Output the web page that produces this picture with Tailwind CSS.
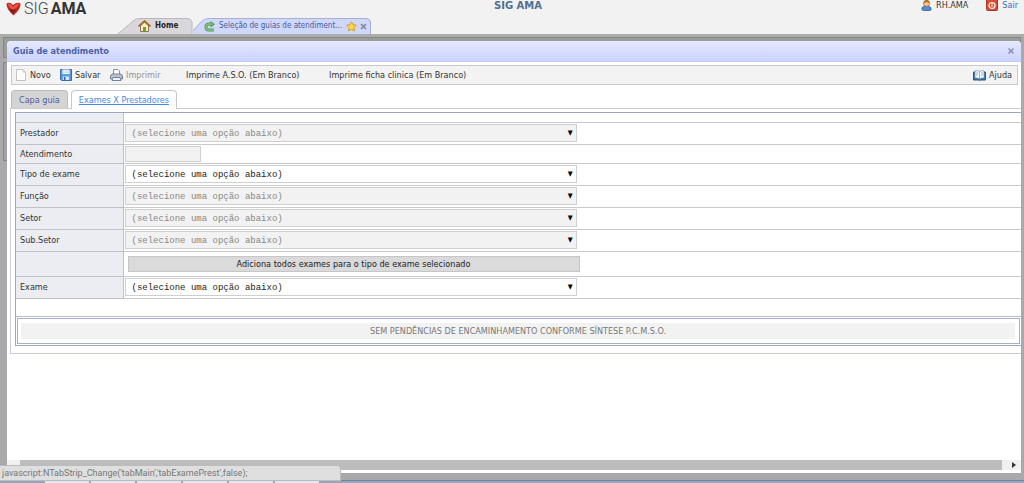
<!DOCTYPE html>
<html lang="pt-BR">
<head>
<meta charset="utf-8">
<meta name="viewport" content="width=device-width, initial-scale=1">
<title>SIG AMA</title>
<script src="https://cdn.jsdelivr.net/npm/@tailwindcss/browser@4"></script>
</head>
<body class="flex h-screen flex-col overflow-hidden bg-[#a8a8a8] font-['DejaVu_Sans_Condensed','DejaVu_Sans',sans-serif] text-[9px] leading-3 text-[#333]">
<header class="grid h-[34px] shrink-0 grid-cols-[1fr_auto_1fr] bg-[#f2f2f2]">
  <div class="flex items-start gap-[3px] pl-[6px]">
    <svg class="mt-px h-[15px] w-[15px] shrink-0" viewBox="0 0 15 15" aria-hidden="true"><path d="M.5 2.500Q4 .5 7 4Q11 .5 14.500 2.500Q15 8 7.500 14.500Q0 8 .5 2.500Z" fill="#ba2924"/><path d="M2 3Q5 2 7 6Q10 2 13 3Q12 6 7 9Q3 7 2 3Z" fill="#ee5140"/><path d="M3 8L7 13 10 9Z" fill="#811b1b"/></svg>
    <span class="flex font-['Roboto',sans-serif] text-[16px] leading-[18px] text-[#333]"><span class="font-light text-[#444]">SIG</span><b class="pl-[2px]">AMA</b></span>
  </div>
  <h1 class="pl-3 font-['DejaVu_Sans',sans-serif] text-[10px] font-bold leading-[12px] text-[#4f6f91]">SIG AMA</h1>
  <div class="flex items-start justify-end gap-[18px] pr-[6px]">
    <span class="flex gap-1 leading-[11px]"><svg class="h-[11px] w-[11px]" viewBox="0 0 11 11" aria-hidden="true"><path d="M1 10Q0 6 5 6Q11 6 10 10Q6 12 1 10Z" fill="#5589d1" stroke="#315990" stroke-width=".7"/><circle cx="5.5" cy="3.5" r="3" fill="#f5c47d" stroke="#8b6337" stroke-width=".7"/><path d="M2.500 3Q3 0 6 0Q9 1 8.500 3L6 2Z" fill="#a66c2b"/></svg>RH.AMA</span>
    <a href="#" class="flex gap-1 leading-[11px] text-[#416bc2]"><svg class="h-[11px] w-3" viewBox="0 0 12 11" aria-hidden="true"><rect x=".5" y="-1" width="11" height="11.500" rx="1" fill="#d94b35" stroke="#b33421"/><circle cx="6" cy="5.500" r="3" fill="none" stroke="#fff" stroke-width="1.200"/><path d="M6 3V7" stroke="#fff"/></svg>Sair</a>
  </div>
  <nav class="col-span-3 -mt-[16px] flex self-end pl-[118px] text-[8px]" aria-label="Janelas">
    <a href="#" class="relative flex h-4 w-[75px] items-center gap-1 pl-5 font-bold text-[#222]">
      <svg class="absolute inset-0 h-full w-full" viewBox="0 0 75 16" preserveAspectRatio="none" aria-hidden="true"><path d="M0 16L15 3Q18 .5 22 .5H69Q73 .5 74 4V16" fill="#d9d7dc" stroke="#b8b8be"/></svg>
      <svg class="relative h-3 w-[13px] shrink-0" viewBox="0 0 13 12" aria-hidden="true"><path d="M2.500 6V11.500H10.500V6L6.500 2Z" fill="#fff0c2" stroke="#8b7654"/><path d="M.5 6.500L6.500 1L12.500 6.500" fill="none" stroke="#a9641f" stroke-width="1.600"/><path d="M5 7H8V11.500H5Z" fill="#709c43"/></svg>
      <span class="relative">Home</span>
    </a>
    <div class="relative flex h-4 w-[178px] items-center pl-[11px] text-[#466099]">
      <svg class="absolute inset-0 h-full w-full" viewBox="0 0 178 16" preserveAspectRatio="none" aria-hidden="true"><path d="M-3 16L8 4Q11 .5 16 .5H173Q177 .5 177.500 4V16" fill="#cfd7fb" stroke="#a9afd3"/></svg>
      <svg class="relative mr-1 h-[11px] w-[11px] shrink-0" viewBox="0 0 11 11" aria-hidden="true"><path d="M10 9H5Q2 9 2 6Q2 3 5 3H7" fill="none" stroke="#4b9850" stroke-width="3"/><path d="M6.500 0L11 3.200L6.500 6.500Z" fill="#4b9850"/><path d="M10 9H5Q2 9 2 6Q2 3 5 3H9" fill="none" stroke="#82c47c" stroke-width="1.500"/></svg>
      <a href="#" class="relative whitespace-nowrap">Seleção de guias de atendiment...</a>
      <svg class="relative ml-auto h-[11px] w-[11px] shrink-0" viewBox="0 0 11 11" aria-hidden="true"><path d="M5.500 .8L7 3.700L10.300 4.200L8 6.500L8.500 9.900L5.500 8.400L2.500 9.900L3 6.500L.7 4.200L4 3.700Z" fill="#ffd84b" stroke="#d79b28"/></svg>
      <button class="relative ml-[2px] mr-[3px] h-3 w-[9px] shrink-0" aria-label="Fechar aba"><svg class="h-3 w-[9px]" viewBox="0 0 9 12"><path d="M2 4L7 9M7 4L2 9" stroke="#8386a2" stroke-width="1.700"/></svg></button>
    </div>
  </nav>
</header>
<main class="relative flex min-h-0 flex-1 flex-col border-t-[3px] border-[#abada9] bg-[#a9a9ab] pb-[7px] pl-[7px] pr-[3px] pt-1">
  <div class="absolute inset-x-[3px] top-0 h-[21px] border border-[#85868a] bg-[#9b9d9b]"></div>
  <div class="absolute inset-x-[3px] top-[25px] h-[99px] border border-[#85868f] bg-[#a2a2aa]"></div>
  <section class="relative flex min-h-0 flex-1 flex-col overflow-hidden rounded-t bg-white" aria-label="Guia de atendimento">
    <div class="flex h-[21px] shrink-0 items-center justify-between border-b border-[#c5ccef] bg-linear-to-b from-[#e5e8ff] to-[#cbd3ff] pl-[6px] pr-[6px]">
      <h2 class="font-bold text-[#4c61a6]">Guia de atendimento</h2>
      <button class="h-2 w-2" aria-label="Fechar"><svg class="h-2 w-2" viewBox="0 0 8 8"><path d="M1.500 1.500L6.500 6.500M6.500 1.500L1.500 6.500" stroke="#8f91b5" stroke-width="1.700"/></svg></button>
    </div>
    <div class="ml-1 mr-[3px] mt-[3px] flex h-5 shrink-0 items-center border border-[#c9c9c9] bg-[#f3f3f3] pl-1 pr-[5px]" role="toolbar">
      <button class="flex w-[44px] items-center gap-1"><svg class="h-3 w-[10px]" viewBox="0 0 10 12" aria-hidden="true"><path d="M.5 .5H7L9.500 3V11.500H.5Z" fill="#fff" stroke="#c2c2c2"/><path d="M7 .5V3H9.500" fill="none" stroke="#c2c2c2"/></svg>Novo</button>
      <button class="flex w-[50px] items-center gap-[3px]"><svg class="h-3 w-3" viewBox="0 0 12 12" aria-hidden="true"><path d="M.5 .5H11.500V11.500H1.500L.5 10.500Z" fill="#5b9be1" stroke="#356eae"/><path d="M2.500 .5H9.500V5H2.500Z" fill="#fff"/><path d="M3 2H9M3 3.700H9" stroke="#a8c5e8" stroke-width=".7"/><path d="M3 7.500H9V11H3Z" fill="#d7e9fb"/><path d="M4 8H5.500V11H4Z" fill="#356eae"/></svg>Salvar</button>
      <button class="flex w-[76px] items-center gap-[3px] text-[#929292]" disabled><svg class="h-3 w-[13px]" viewBox="0 0 13 12" aria-hidden="true"><path d="M3.500 6V.5H8L9.500 2V6" fill="#fff" stroke="#7294c0"/><path d="M2 5H11L12.500 7V10H.5V7Z" fill="#bec2c8" stroke="#777f8b"/><path d="M3 8.500H10L11 11.500H2Z" fill="#edf4ff" stroke="#7083a0"/></svg>Imprimir</button>
      <button class="w-[143px] text-left">Imprime A.S.O. (Em Branco)</button>
      <button>Imprime ficha clinica (Em Branco)</button>
      <button class="ml-auto flex items-center gap-[3px]"><svg class="h-[11px] w-[13px]" viewBox="0 0 13 11" aria-hidden="true"><path d="M.5 2H12.500V10H7.500L6.500 10.700L5.500 10H.5Z" fill="#3d77a9" stroke="#2b557b"/><path d="M2 1Q5 0 6.500 1.500Q8 0 11 1V8Q8 7.500 6.500 9Q5 7.500 2 8Z" fill="#fff" stroke="#688ca8" stroke-width=".7"/><path d="M6.500 1.500V9M3 3H5M3 5H5M8 3H10M8 5H10" stroke="#6990ad" stroke-width=".7"/></svg>Ajuda</button>
    </div>
    <div class="relative z-10 ml-1 mt-[5px] flex h-[18px] shrink-0 items-end gap-[3px]" role="tablist">
      <button role="tab" aria-selected="false" class="h-[18px] rounded-t border border-b-0 border-[#bcbcbc] bg-[#d4d4d4] px-[7px] text-[#4f60a8]">Capa guia</button>
      <button role="tab" aria-selected="true" class="-mb-px h-[19px] rounded-t border border-b-0 border-[#c7c7c7] bg-white px-[7px] text-[#4b86e3] underline">Exames X Prestadores</button>
    </div>
    <div class="ml-[3px] shrink-0 border border-r-0 border-[#cbcbd3] pb-[7px] pl-1 pt-[3px]">
      <div class="border border-r-0 border-[#9ca7bf]">
        <table class="w-full table-fixed border-collapse [&_select]:pt-[2px] [&_td]:border-b [&_td]:border-[#cacace] [&_td]:p-0 [&_td]:pl-px [&_th]:border-r [&_th]:border-b [&_th]:border-[#c0c2c8] [&_th]:bg-[#ebedf2] [&_th]:p-0 [&_th]:pl-1 [&_th]:text-left [&_th]:font-normal">
          <colgroup><col class="w-[107px]"><col></colgroup>
          <tbody>
            <tr class="h-[9px]"><th></th><td></td></tr>
            <tr class="h-[22px]"><th><label for="prest">Prestador</label></th><td><div class="relative h-[18px] w-[452px]"><select id="prest" disabled class="block h-full w-full appearance-none border border-[#cfcfcf] bg-[#f2f2f2] pl-[6px] font-['Liberation_Mono',monospace] text-[9px] text-[#888] opacity-100"><option>(selecione uma opção abaixo)</option></select><span class="pointer-events-none absolute right-1 top-[4px] text-[7px] leading-[11px] text-black">▼</span></div></td></tr>
            <tr class="h-[19px]"><th><label for="atend">Atendimento</label></th><td><input id="atend" type="text" disabled class="block h-4 w-[76px] border border-[#cfcfcf] bg-[#f2f2f2]"></td></tr>
            <tr class="h-[22px]"><th><label for="tipo">Tipo de exame</label></th><td><div class="relative h-[18px] w-[452px]"><select id="tipo" class="block h-full w-full appearance-none border border-[#cfcfcf] bg-white pl-[6px] font-['Liberation_Mono',monospace] text-[9px] text-[#222]"><option>(selecione uma opção abaixo)</option></select><span class="pointer-events-none absolute right-1 top-[4px] text-[7px] leading-[11px] text-black">▼</span></div></td></tr>
            <tr class="h-[22px]"><th><label for="func">Função</label></th><td><div class="relative h-[18px] w-[452px]"><select id="func" disabled class="block h-full w-full appearance-none border border-[#cfcfcf] bg-[#f2f2f2] pl-[6px] font-['Liberation_Mono',monospace] text-[9px] text-[#888] opacity-100"><option>(selecione uma opção abaixo)</option></select><span class="pointer-events-none absolute right-1 top-[4px] text-[7px] leading-[11px] text-black">▼</span></div></td></tr>
            <tr class="h-[22px]"><th><label for="setor">Setor</label></th><td><div class="relative h-[18px] w-[452px]"><select id="setor" disabled class="block h-full w-full appearance-none border border-[#cfcfcf] bg-[#f2f2f2] pl-[6px] font-['Liberation_Mono',monospace] text-[9px] text-[#888] opacity-100"><option>(selecione uma opção abaixo)</option></select><span class="pointer-events-none absolute right-1 top-[4px] text-[7px] leading-[11px] text-black">▼</span></div></td></tr>
            <tr class="h-[22px]"><th><label for="sub">Sub.Setor</label></th><td><div class="relative h-[18px] w-[452px]"><select id="sub" disabled class="block h-full w-full appearance-none border border-[#cfcfcf] bg-[#f2f2f2] pl-[6px] font-['Liberation_Mono',monospace] text-[9px] text-[#888] opacity-100"><option>(selecione uma opção abaixo)</option></select><span class="pointer-events-none absolute right-1 top-[4px] text-[7px] leading-[11px] text-black">▼</span></div></td></tr>
            <tr class="h-[25px]"><th></th><td><button class="ml-[3px] block h-4 w-[452px] border border-[#c6c6c6] bg-[#dadada] text-[#222]">Adiciona todos exames para o tipo de exame selecionado</button></td></tr>
            <tr class="h-[22px]"><th><label for="exame">Exame</label></th><td><div class="relative h-[18px] w-[452px]"><select id="exame" class="block h-full w-full appearance-none border border-[#cfcfcf] bg-white pl-[6px] font-['Liberation_Mono',monospace] text-[9px] text-[#222]"><option>(selecione uma opção abaixo)</option></select><span class="pointer-events-none absolute right-1 top-[4px] text-[7px] leading-[11px] text-black">▼</span></div></td></tr>
          </tbody>
        </table>
        <div class="mt-[17px] border-t border-[#b5bcd0] p-px">
          <div class="border border-[#a7b0c6] p-1 pl-[3px]"><p class="h-4 bg-[#f2f2f2] text-center leading-4 text-[#777]">SEM PENDÊNCIAS DE ENCAMINHAMENTO CONFORME SÍNTESE P.C.M.S.O.</p></div>
        </div>
      </div>
    </div>
    <div class="mb-[3px] mt-auto flex h-[10px] shrink-0 items-center bg-[#f0f0f0] pl-[13px]" aria-hidden="true">
      <div class="h-full flex-1 bg-[#bcbcbc]"></div>
      <svg class="ml-[10px] mr-[5px] h-[6px] w-1" viewBox="0 0 4 6"><path d="M0 0L4 3L0 6Z" fill="#333"/></svg>
    </div>
  </section>
</main>
<footer class="flex h-[3px] shrink-0 gap-[2px] border-t border-[#70849a] bg-[#91a8c1] pl-[45px]" aria-hidden="true">
  <i class="w-[44px] bg-[#dce8f5]"></i><i class="w-[44px] bg-[#dce8f5]"></i><i class="w-[44px] bg-[#dce8f5]"></i><i class="w-[44px] bg-[#dce8f5]"></i><i class="w-[44px] bg-[#dce8f5]"></i><i class="w-[44px] bg-[#dce8f5]"></i>
</footer>
<div class="absolute bottom-[2px] left-0 h-4 w-[341px] rounded-tr-sm border border-l-0 border-[#bcbcbc] bg-[#dfdfdf] pl-[2px] font-['Roboto',sans-serif] text-[9px] leading-[15px] text-[#777]">javascript:NTabStrip_Change('tabMain','tabExamePrest',false);</div>
</body>
</html>
